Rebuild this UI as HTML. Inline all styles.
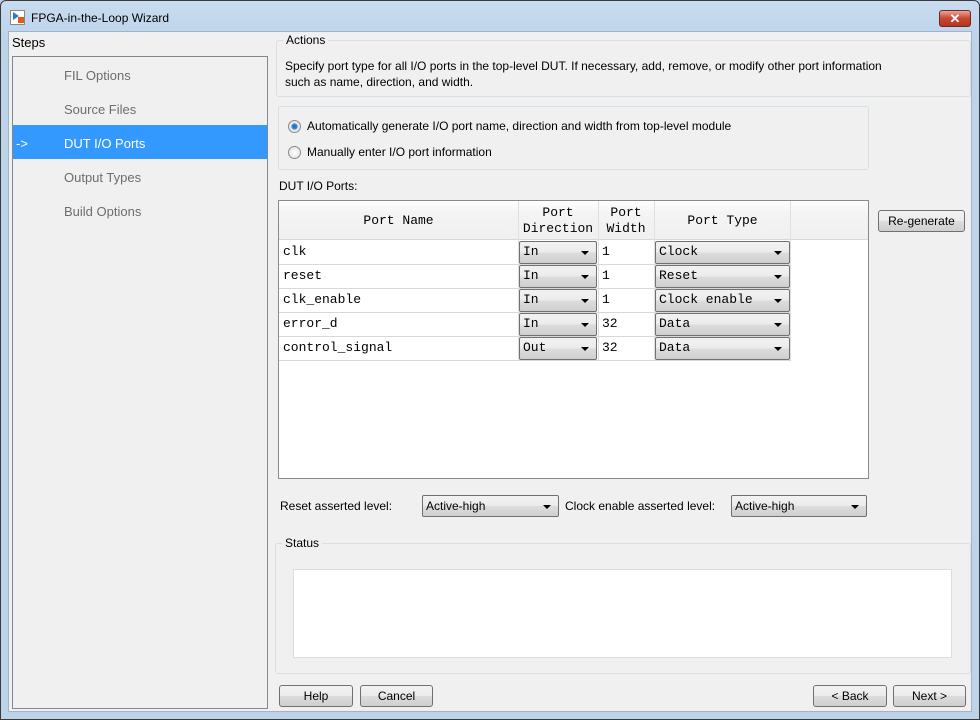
<!DOCTYPE html><html><head><style>
*{box-sizing:border-box;margin:0;padding:0}
body{width:980px;height:720px;overflow:hidden;background:#bcd3ea;font-family:"Liberation Sans",sans-serif;font-size:12px;color:#000;position:relative}
.a{position:absolute}
.frame{left:0;top:0;width:980px;height:720px;border:1px solid #3a3a3a;border-radius:6px 6px 0 0;background:linear-gradient(#c9dcef,#bcd3ea 40px)}
.client{left:8px;top:31px;width:964px;height:681px;background:#f0f0f0;border:1px solid #a0b4c8}
.grp{border:1px solid #d5dfe5;border-radius:3px}
.btn{border:1px solid #707070;border-radius:3px;background:linear-gradient(#f2f2f2,#ebebeb 50%,#dddddd 50%,#cfcfcf);text-align:center;line-height:20px}
.sel{border:1px solid #707070;border-radius:2px;background:linear-gradient(#f2f2f2,#ebebeb 50%,#dddddd 50%,#cfcfcf);padding-left:3px;line-height:20px}
.sel:after{content:"";position:absolute;right:7px;top:9px;border-left:4px solid transparent;border-right:4px solid transparent;border-top:4px solid #000}
.mono{font-family:"Liberation Mono",monospace;font-size:13px}
.radio{width:13px;height:13px;border-radius:50%;border:1px solid #8a8a8a;background:radial-gradient(#fff,#ddd)}
.gl{color:#6d6d6d;font-size:13px}
</style></head><body>
<div class="a frame"></div>
<div class="a" style="left:10px;top:10px;width:15px;height:15px;border:1px solid #888;background:#fff"></div>
<div class="a" style="left:13px;top:12px;width:0;height:0;border-top:4px solid transparent;border-bottom:4px solid transparent;border-left:6px solid #2a7bc0"></div>
<div class="a" style="left:18px;top:17px;width:6px;height:6px;background:#e05a1a"></div>
<div class="a" style="left:31px;top:11px;font-size:12px">FPGA-in-the-Loop Wizard</div>
<div class="a" style="left:939px;top:10px;width:32px;height:17px;border:1px solid #6b2a22;border-radius:3px;background:linear-gradient(#e8a497,#c9462f 50%,#b83420);color:#fff;font-weight:bold;text-align:center;line-height:15px;font-size:13px">✕</div>
<div class="a client"></div>
<div class="a" style="left:12px;top:35px;font-size:13px">Steps</div>
<div class="a" style="left:12px;top:56px;width:256px;height:653px;border:1px solid #828790;background:#f0f0f0"></div>
<div class="a gl" style="left:64px;top:68px">FIL Options</div>
<div class="a gl" style="left:64px;top:102px">Source Files</div>
<div class="a" style="left:13px;top:125px;width:254px;height:34px;background:#3399ff"></div>
<div class="a" style="left:16px;top:136px;color:#fff;font-size:13px">-&gt;</div>
<div class="a" style="left:64px;top:136px;color:#fff;font-size:13px">DUT I/O Ports</div>
<div class="a gl" style="left:64px;top:170px">Output Types</div>
<div class="a gl" style="left:64px;top:204px">Build Options</div>

<div class="a grp" style="left:276px;top:40px;width:695px;height:57px"></div>
<div class="a" style="left:283px;top:33px;background:#f0f0f0;padding:0 3px;font-size:12px">Actions</div>
<div class="a" style="left:285px;top:58px;width:690px;line-height:16px;white-space:nowrap">Specify port type for all I/O ports in the top-level DUT. If necessary, add, remove, or modify other port information<br>such as name, direction, and width.</div>

<div class="a grp" style="left:278px;top:106px;width:591px;height:64px"></div>
<div class="a radio" style="left:288px;top:120px;background:radial-gradient(#1a6ab0 0,#3b8fd6 35%,#e8e8e8 45%)"></div>
<div class="a" style="left:307px;top:119px">Automatically generate I/O port name, direction and width from top-level module</div>
<div class="a radio" style="left:288px;top:146px"></div>
<div class="a" style="left:307px;top:145px">Manually enter I/O port information</div>
<div class="a" style="left:279px;top:179px">DUT I/O Ports:</div>

<div class="a" style="left:278px;top:200px;width:591px;height:279px;border:1px solid #8a8a8a;background:#fff"></div>
<div class="a" style="left:279px;top:201px;width:512px;height:39px;background:linear-gradient(#fff,#f4f4f4 30%,#f0f0f0);border-bottom:1px solid #d8d8d8"></div>
<div class="a" style="left:791px;top:201px;width:77px;height:39px;background:linear-gradient(#fff,#f4f4f4 30%,#f0f0f0);border-bottom:1px solid #d8d8d8"></div>
<div class="a" style="left:518px;top:201px;width:1px;height:159px;background:#e0e0e0"></div>
<div class="a" style="left:598px;top:201px;width:1px;height:159px;background:#e0e0e0"></div>
<div class="a" style="left:654px;top:201px;width:1px;height:159px;background:#e0e0e0"></div>
<div class="a" style="left:790px;top:201px;width:1px;height:159px;background:#e0e0e0"></div>
<div class="a mono" style="left:279px;top:213px;width:239px;text-align:center">Port Name</div>
<div class="a mono" style="left:518px;top:205px;width:80px;text-align:center;line-height:16px">Port<br>Direction</div>
<div class="a mono" style="left:598px;top:205px;width:56px;text-align:center;line-height:16px">Port<br>Width</div>
<div class="a mono" style="left:655px;top:213px;width:135px;text-align:center">Port Type</div>

<div class="a" style="left:279px;top:264px;width:512px;height:1px;background:#d8d8d8"></div>
<div class="a" style="left:279px;top:288px;width:512px;height:1px;background:#d8d8d8"></div>
<div class="a" style="left:279px;top:312px;width:512px;height:1px;background:#d8d8d8"></div>
<div class="a" style="left:279px;top:336px;width:512px;height:1px;background:#d8d8d8"></div>
<div class="a" style="left:279px;top:360px;width:512px;height:1px;background:#d8d8d8"></div>

<div class="a mono" style="left:283px;top:244px">clk</div>
<div class="a sel mono" style="left:519px;top:241px;width:78px;height:23px">In</div>
<div class="a mono" style="left:602px;top:244px">1</div>
<div class="a sel mono" style="left:655px;top:241px;width:135px;height:23px">Clock</div>

<div class="a mono" style="left:283px;top:268px">reset</div>
<div class="a sel mono" style="left:519px;top:265px;width:78px;height:23px">In</div>
<div class="a mono" style="left:602px;top:268px">1</div>
<div class="a sel mono" style="left:655px;top:265px;width:135px;height:23px">Reset</div>

<div class="a mono" style="left:283px;top:292px">clk_enable</div>
<div class="a sel mono" style="left:519px;top:289px;width:78px;height:23px">In</div>
<div class="a mono" style="left:602px;top:292px">1</div>
<div class="a sel mono" style="left:655px;top:289px;width:135px;height:23px">Clock enable</div>

<div class="a mono" style="left:283px;top:316px">error_d</div>
<div class="a sel mono" style="left:519px;top:313px;width:78px;height:23px">In</div>
<div class="a mono" style="left:602px;top:316px">32</div>
<div class="a sel mono" style="left:655px;top:313px;width:135px;height:23px">Data</div>

<div class="a mono" style="left:283px;top:340px">control_signal</div>
<div class="a sel mono" style="left:519px;top:337px;width:78px;height:23px">Out</div>
<div class="a mono" style="left:602px;top:340px">32</div>
<div class="a sel mono" style="left:655px;top:337px;width:135px;height:23px">Data</div>

<div class="a btn" style="left:878px;top:210px;width:87px;height:22px">Re-generate</div>

<div class="a" style="left:280px;top:499px">Reset asserted level:</div>
<div class="a sel" style="left:422px;top:495px;width:137px;height:22px">Active-high</div>
<div class="a" style="left:565px;top:499px">Clock enable asserted level:</div>
<div class="a sel" style="left:731px;top:495px;width:136px;height:22px">Active-high</div>

<div class="a grp" style="left:275px;top:543px;width:696px;height:131px"></div>
<div class="a" style="left:282px;top:536px;background:#f0f0f0;padding:0 3px">Status</div>
<div class="a" style="left:293px;top:569px;width:659px;height:89px;background:#fff;border:1px solid #dcdcdc"></div>

<div class="a btn" style="left:279px;top:685px;width:74px;height:22px">Help</div>
<div class="a btn" style="left:360px;top:685px;width:73px;height:22px">Cancel</div>
<div class="a btn" style="left:813px;top:685px;width:74px;height:22px">&lt; Back</div>
<div class="a btn" style="left:893px;top:685px;width:73px;height:22px">Next &gt;</div>
</body></html>
